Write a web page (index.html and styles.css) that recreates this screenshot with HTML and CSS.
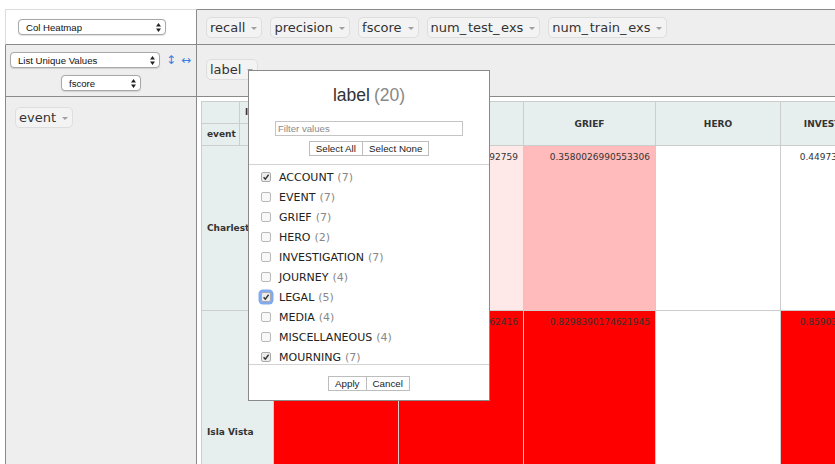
FILE: index.html
```html
<!DOCTYPE html>
<html>
<head>
<meta charset="utf-8">
<title>Pivot</title>
<link rel="stylesheet" href="styles.css">
</head>
<body>
<div class="pvt-ui">
  <div class="cell renderer">
    <div class="select sel-renderer"><span class="sel-text">Col Heatmap</span><svg class="sel-arrows" width="5" height="9" viewBox="0 0 5 9"><path d="M0 3.6 L2.5 0 L5 3.6 Z M0 5.4 L2.5 9 L5 5.4 Z" fill="#222"/></svg></div>
  </div>
  <div class="cell axis unused">
    <ul class="attrs">
      <li class="attr">recall<i class="tri"></i></li>
      <li class="attr">precision<i class="tri"></i></li>
      <li class="attr">fscore<i class="tri"></i></li>
      <li class="attr">num<span class="us">_</span>test<span class="us">_</span>exs<i class="tri"></i></li>
      <li class="attr">num<span class="us">_</span>train<span class="us">_</span>exs<i class="tri"></i></li>
    </ul>
  </div>
  <div class="cell axis vals">
    <div class="vals-row">
      <div class="select sel-agg"><span class="sel-text">List Unique Values</span><svg class="sel-arrows" width="5" height="9" viewBox="0 0 5 9"><path d="M0 3.6 L2.5 0 L5 3.6 Z M0 5.4 L2.5 9 L5 5.4 Z" fill="#222"/></svg></div>
      <span class="order order-row">↕</span>
      <span class="order order-col">↔</span>
    </div>
    <div class="vals-row vals-center">
      <div class="select sel-attr"><span class="sel-text">fscore</span><svg class="sel-arrows" width="5" height="9" viewBox="0 0 5 9"><path d="M0 3.6 L2.5 0 L5 3.6 Z M0 5.4 L2.5 9 L5 5.4 Z" fill="#222"/></svg></div>
    </div>
  </div>
  <div class="cell axis cols">
    <ul class="attrs">
      <li class="attr">label<i class="tri"></i></li>
    </ul>
  </div>
  <div class="cell axis rows">
    <ul class="attrs">
      <li class="attr">event<i class="tri"></i></li>
    </ul>
  </div>
  <div class="cell output">
    <table class="pvt-table">
      <colgroup>
        <col class="w-a"><col class="w-b"><col class="w-v"><col class="w-v"><col class="w-g"><col class="w-v"><col class="w-v"><col class="w-v">
      </colgroup>
      <thead>
        <tr class="hrow">
          <th></th>
          <th class="axis-label">label</th>
          <th class="col-label" rowspan="2">ACCOUNT</th>
          <th class="col-label" rowspan="2">EVENT</th>
          <th class="col-label" rowspan="2">GRIEF</th>
          <th class="col-label" rowspan="2">HERO</th>
          <th class="col-label" rowspan="2">INVESTIGATION</th>
          <th class="col-label" rowspan="2">JOURNEY</th>
        </tr>
        <tr class="hrow">
          <th class="axis-label">event</th>
          <th></th>
        </tr>
      </thead>
      <tbody>
        <tr class="row-charleston">
          <th class="row-label" colspan="2">Charleston</th>
          <td class="heat-1">0.5124093371684723</td>
          <td class="heat-0">0.4089316731292759</td>
          <td class="heat-2">0.3580026990553306</td>
          <td class="blank"></td>
          <td class="blank">0.4497311820453215</td>
          <td class="blank"></td>
        </tr>
        <tr class="row-isla">
          <th class="row-label" colspan="2">Isla Vista</th>
          <td class="heat-max">0.8714395280221453</td>
          <td class="heat-max">0.7961823401762416</td>
          <td class="heat-max">0.8298390174621945</td>
          <td class="blank"></td>
          <td class="heat-max">0.8590312786420157</td>
          <td class="blank"></td>
        </tr>
      </tbody>
    </table>
  </div>
</div>

<div class="filter-box">
  <h4 class="fb-title">label<span class="fb-count">(20)</span></h4>
  <div class="fb-search"><input class="fb-input" type="text" placeholder="Filter values"></div>
  <div class="fb-buttons"><button class="fb-btn">Select All</button><button class="fb-btn">Select None</button></div>
  <div class="fb-list">
    <div class="fb-item"><span class="cb checked"><svg width="10" height="10" viewBox="0 0 10 10"><path d="M2.6 5.2 L4.3 7.1 L7.6 2.8" fill="none" stroke="#333" stroke-width="1.4"/></svg></span><span class="fb-name">ACCOUNT</span><span class="fb-num">(7)</span></div>
    <div class="fb-item"><span class="cb"></span><span class="fb-name">EVENT</span><span class="fb-num">(7)</span></div>
    <div class="fb-item"><span class="cb"></span><span class="fb-name">GRIEF</span><span class="fb-num">(7)</span></div>
    <div class="fb-item"><span class="cb"></span><span class="fb-name">HERO</span><span class="fb-num">(2)</span></div>
    <div class="fb-item"><span class="cb"></span><span class="fb-name">INVESTIGATION</span><span class="fb-num">(7)</span></div>
    <div class="fb-item"><span class="cb"></span><span class="fb-name">JOURNEY</span><span class="fb-num">(4)</span></div>
    <div class="fb-item"><span class="cb checked focused"><svg width="10" height="10" viewBox="0 0 10 10"><path d="M2.6 5.2 L4.3 7.1 L7.6 2.8" fill="none" stroke="#333" stroke-width="1.4"/></svg></span><span class="fb-name">LEGAL</span><span class="fb-num">(5)</span></div>
    <div class="fb-item"><span class="cb"></span><span class="fb-name">MEDIA</span><span class="fb-num">(4)</span></div>
    <div class="fb-item"><span class="cb"></span><span class="fb-name">MISCELLANEOUS</span><span class="fb-num">(4)</span></div>
    <div class="fb-item"><span class="cb checked"><svg width="10" height="10" viewBox="0 0 10 10"><path d="M2.6 5.2 L4.3 7.1 L7.6 2.8" fill="none" stroke="#333" stroke-width="1.4"/></svg></span><span class="fb-name">MOURNING</span><span class="fb-num">(7)</span></div>
    <div class="fb-item"><span class="cb"></span><span class="fb-name">POLITICS</span><span class="fb-num">(6)</span></div>
    <div class="fb-item"><span class="cb"></span><span class="fb-name">RELIGION</span><span class="fb-num">(3)</span></div>
  </div>
  <div class="fb-actions"><button class="fb-btn">Apply</button><button class="fb-btn">Cancel</button></div>
</div>
</body>
</html>
```
FILE: styles.css
```css
html, body {
  margin: 0;
  overflow: hidden;
  background: #fff;
}
body {
  position: relative;
  width: 835px;
  height: 464px;
  box-sizing: border-box;
  padding: 9px 0 0 5px;
  font-family: "DejaVu Sans", Verdana, sans-serif;
  color: #333;
}
.pvt-ui {
  display: grid;
  grid-template-columns: 192px 1100px;
  grid-template-rows: 36px 52px 500px;
}
.cell {
  box-sizing: border-box;
  border-right: 1px solid #8a8a8a;
  border-bottom: 1px solid #8a8a8a;
}
.renderer {
  border-top: 1px solid #dcdcdc;
  border-left: 1px solid #dcdcdc;
  display: flex;
  align-items: center;
  padding-left: 12px;
}
.axis { background: #eee; }
.unused {
  border-top: 1px solid #8a8a8a;
  display: flex;
  align-items: center;
  padding-left: 9px;
}
.vals {
  border-left: 1px solid #8a8a8a;
  padding: 7px 0 0 4px;
}
.cols { padding: 14px 0 0 9px; }
.rows {
  border-left: 1px solid #8a8a8a;
  padding: 10px 0 0 9px;
}
.output {
  background: #fff;
  padding: 4px 0 0 4px;
}

.attrs {
  list-style: none;
  margin: 0;
  padding: 0;
  display: flex;
  gap: 8px;
}
.attr {
  display: inline-flex;
  align-items: center;
  background: #f3f3f3;
  border: 1px solid #dedede;
  border-radius: 5px;
  padding: 2px 4px 2px 3px;
  font-size: 13px;
  line-height: 15px;
  color: #333;
  white-space: nowrap;
}
.us { letter-spacing: 1.7px; }
.tri {
  display: inline-block;
  width: 0;
  height: 0;
  border-left: 3px solid transparent;
  border-right: 3px solid transparent;
  border-top: 3.5px solid #a0a0a0;
  margin-left: 6px;
  margin-top: 2px;
}

.select {
  box-sizing: border-box;
  height: 16px;
  display: flex;
  align-items: center;
  justify-content: space-between;
  background: #fff;
  border: 1px solid #a9a9a9;
  border-radius: 4px;
  padding: 0 4px 0 7px;
  font-family: "Liberation Sans", Arial, sans-serif;
  font-size: 9.6px;
  color: #111;
  box-shadow: 0 0.5px 1px rgba(0,0,0,0.12);
}
.sel-text { white-space: nowrap; }
.sel-arrows { flex: none; }
.sel-renderer { width: 148px; }
.sel-agg { width: 150px; }
.sel-attr { width: 80px; }

.vals-row {
  display: flex;
  align-items: center;
  height: 16px;
}
.vals-row + .vals-row { margin-top: 7px; }
.vals-center { justify-content: center; padding-right: 4px; }
.order {
  color: #3b7fe0;
  font-size: 12px;
  line-height: 16px;
}
.order-row { margin-left: 6px; }
.order-col { margin-left: 5px; }

.pvt-table {
  border-collapse: collapse;
  table-layout: fixed;
  width: 829px;
  font-family: "DejaVu Sans", Verdana, sans-serif;
  font-size: 9px;
  color: #333;
}
.w-a { width: 38px; }
.w-b { width: 34px; }
.w-v { width: 125px; }
.w-g { width: 132px; }
.pvt-table th {
  background: #e6eeee;
  border: 1px solid #cdcdcd;
  padding: 5px;
  line-height: 11px;
  font-weight: bold;
  text-align: left;
  white-space: nowrap;
  overflow: hidden;
}
.pvt-table th.col-label { text-align: center; vertical-align: middle; padding-top: 7px; }
.pvt-table th.row-label { vertical-align: middle; }
.pvt-table td {
  border: 1px solid #cdcdcd;
  padding: 6px 5px 5px;
  line-height: 11px;
  text-align: right;
  vertical-align: top;
  white-space: nowrap;
  overflow: hidden;
}
.hrow { height: 22px; }
.row-charleston { height: 165px; }
.row-isla { height: 244px; }
.blank { background: #fff; }
.heat-0 { background: #ffe8e8; }
.heat-1 { background: #ffd4d4; }
.heat-2 { background: #ffbbbb; }
.heat-max { background: #ff0000; }

.filter-box {
  position: absolute;
  left: 248px;
  top: 70px;
  width: 240px;
  border: 1px solid #8a8a8a;
  background: #fff;
  text-align: center;
  z-index: 10;
  padding-bottom: 9px;
}
.fb-title {
  margin: 14px 0 0;
  font-family: "Liberation Sans", Arial, sans-serif;
  font-size: 17.5px;
  line-height: 20px;
  font-weight: normal;
  color: #333;
}
.fb-count { color: #888; margin-left: 4px; }
.fb-search { margin-top: 16px; display: flex; justify-content: center; }
.fb-input {
  box-sizing: border-box;
  width: 188px;
  height: 15px;
  margin: 0;
  border: 1px solid #c4c4c4;
  padding: 0 2px;
  font-family: "Liberation Sans", Arial, sans-serif;
  font-size: 9.6px;
  outline: none;
}
.fb-input::placeholder { color: #8a8a8a; }
.fb-buttons, .fb-actions {
  display: flex;
  justify-content: center;
}
.fb-buttons { margin-top: 5px; }
.fb-btn {
  box-sizing: border-box;
  height: 15px;
  margin: 0;
  padding: 0 6px;
  background: #fff;
  border: 1px solid #bdbdbd;
  border-radius: 0;
  font-family: "Liberation Sans", Arial, sans-serif;
  font-size: 9.8px;
  line-height: 13px;
  color: #222;
}
.fb-btn + .fb-btn { border-left: none; }
.fb-list {
  margin-top: 8px;
  height: 201px;
  overflow: hidden;
  border-top: 1px solid #d3d3d3;
  border-bottom: 1px solid #d3d3d3;
  padding-top: 2px;
  box-sizing: border-box;
  text-align: left;
}
.fb-item {
  display: flex;
  align-items: center;
  height: 20px;
  font-family: "DejaVu Sans", Verdana, sans-serif;
  font-size: 11px;
  color: #222;
  white-space: nowrap;
}
.cb {
  box-sizing: border-box;
  width: 10px;
  height: 10px;
  margin: 0 8px 0 12px;
  border: 1px solid #b9b9b9;
  border-radius: 2px;
  background: #f8f8f8;
  display: flex;
  align-items: center;
  justify-content: center;
  flex: none;
}
.cb svg { display: block; margin: -1px; }
.cb.checked { background: #ececec; border-color: #aaa; }
.cb.focused { box-shadow: 0 0 0 2.5px #7fa9f2; }
.fb-num { color: #888; margin-left: 4px; }
.fb-actions { margin-top: 11px; }
```
